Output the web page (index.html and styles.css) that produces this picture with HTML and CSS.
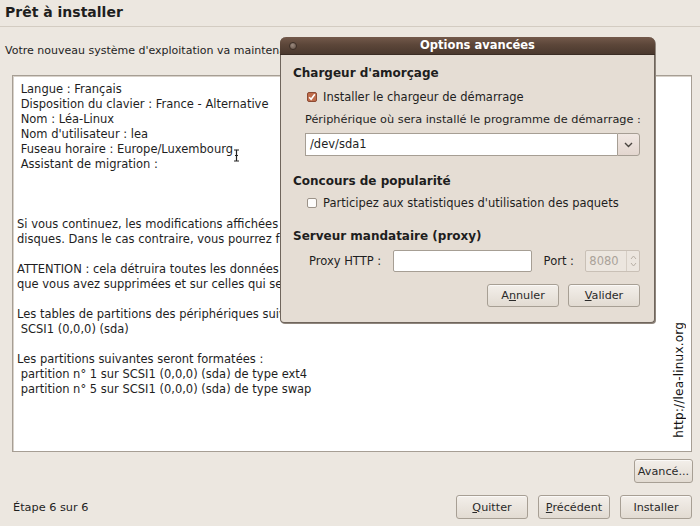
FILE: index.html
```html
<!DOCTYPE html>
<html lang="fr">
<head>
    <meta charset="UTF-8">
    <title>Prêt à installer</title>
    <link rel="stylesheet" href="styles.css">
</head>
<body>

    <!-- INSTALLER WINDOW -->
    <div class="installer">
        <h1 class="page-title">Prêt à installer</h1>
        <p class="intro">Votre nouveau système d'exploitation va maintenant être installé avec les paramètres suivants :</p>

        <div class="summary">
<pre class="summary-text"> Langue : Français
 Disposition du clavier : France - Alternative
 Nom : Léa-Linux
 Nom d'utilisateur : lea
 Fuseau horaire : Europe/Luxembourg
 Assistant de migration :



Si vous continuez, les modifications affichées ci-dessous seront écrites sur les
disques. Dans le cas contraire, vous pourrez faire d'autres modifications.

ATTENTION : cela détruira toutes les données présentes sur les partitions
que vous avez supprimées et sur celles qui seront formatées.

Les tables de partitions des périphériques suivants seront modifiées :
 SCSI1 (0,0,0) (sda)

Les partitions suivantes seront formatées :
 partition n° 1 sur SCSI1 (0,0,0) (sda) de type ext4
 partition n° 5 sur SCSI1 (0,0,0) (sda) de type swap</pre>
            <svg class="ibeam" width="7" height="13" viewBox="0 0 7 13">
                <path d="M1 1h2l.5 .5.5-.5h2M3.5 1.5v10M1 12h2l.5-.5.5.5h2M2 6.5h3" fill="none" stroke="#222" stroke-width="1.2"/>
            </svg>
            <span class="watermark">http://lea-linux.org</span>
        </div>

        <div class="advanced-row">
            <button class="btn">Avancé...</button>
        </div>

        <div class="footer">
            <span class="step">Étape 6 sur 6</span>
            <div class="nav">
                <button class="btn"><u>Q</u>uitter</button>
                <button class="btn"><u>P</u>récédent</button>
                <button class="btn">Installer</button>
            </div>
        </div>
    </div>

    <!-- ADVANCED OPTIONS DIALOG -->
    <div class="dialog">
        <div class="dialog-titlebar">
            <span class="close-dot"></span>
            <span class="dialog-title">Options avancées</span>
        </div>

        <div class="dialog-body">
            <h2 class="section">Chargeur d'amorçage</h2>
            <label class="check-row">
                <span class="checkbox checked">
                    <svg width="8" height="8" viewBox="0 0 8 8"><path d="M1.2 4.2l1.9 2 3.7-5" fill="none" stroke="#fff" stroke-width="1.6"/></svg>
                </span>
                Installer le chargeur de démarrage
            </label>
            <p class="field-label">Périphérique où sera installé le programme de démarrage :</p>
            <div class="combo">
                <span class="combo-entry">/dev/sda1</span>
                <span class="combo-button">
                    <svg width="9" height="6" viewBox="0 0 9 6"><path d="M1 1l3.5 3.5L8 1" fill="none" stroke="#4a4540" stroke-width="1.4"/></svg>
                </span>
            </div>

            <h2 class="section section-gap">Concours de popularité</h2>
            <label class="check-row check-row-tight">
                <span class="checkbox"></span>
                Participez aux statistiques d'utilisation des paquets
            </label>

            <h2 class="section section-gap2">Serveur mandataire (proxy)</h2>
            <div class="proxy-row">
                <span class="proxy-label">Proxy HTTP :</span>
                <span class="entry proxy-entry"></span>
                <span class="port-label">Port :</span>
                <span class="spin">
                    <span class="spin-value">8080</span>
                    <span class="spin-arrows">
                        <svg width="7" height="14" viewBox="0 0 7 14"><path d="M1 5l2.5-3L6 5M1 9l2.5 3L6 9" fill="none" stroke="#b8b0a6" stroke-width="1"/></svg>
                    </span>
                </span>
            </div>

            <div class="dialog-actions">
                <button class="btn">A<u>n</u>nuler</button>
                <button class="btn"><u>V</u>alider</button>
            </div>
        </div>
    </div>

</body>
</html>
```

FILE: styles.css
```css
* {
    margin: 0;
    padding: 0;
    box-sizing: border-box;
}

body {
    width: 700px;
    height: 526px;
    background: #ece7e0;
    font-family: "DejaVu Sans", sans-serif;
    font-size: 11.5px;
    color: #1e1e1e;
    overflow: hidden;
    position: relative;
}

/* INSTALLER WINDOW */
.installer {
    display: flex;
    flex-direction: column;
    height: 526px;
}

.page-title {
    font-size: 14px;
    font-weight: bold;
    padding: 4px 5px 0;
    height: 27px;
    border-bottom: 1px solid #d3ccc2;
}

.intro {
    font-size: 11px;
    padding: 17px 5px 0;
    height: 48px;
    white-space: nowrap;
}

.summary {
    position: relative;
    margin: 0 8px 0 12px;
    height: 377px;
    background: #fff;
    border: 1px solid #a69e94;
    box-shadow: inset 1px 1px 0 #d8d2ca;
    overflow: hidden;
}

.summary-text {
    font-family: "DejaVu Sans", sans-serif;
    font-size: 11.5px;
    line-height: 15px;
    padding: 6px 0 0 4px;
    color: #1e1e1e;
}

.ibeam {
    position: absolute;
    left: 220px;
    top: 73px;
}

.watermark {
    position: absolute;
    right: 5px;
    top: 246px;
    font-size: 12px;
    color: #111;
    writing-mode: vertical-rl;
    transform: rotate(180deg);
    letter-spacing: 0.2px;
}

.btn {
    font-family: "DejaVu Sans", sans-serif;
    font-size: 11.2px;
    color: #2a2a2a;
    height: 24px;
    padding: 0 6px;
    border: 1px solid #a79f94;
    border-radius: 3px;
    background: linear-gradient(#f3efea, #e2dbd2);
    box-shadow: inset 0 1px 0 #fbf9f7;
}

.btn u { text-decoration: underline; }

.advanced-row {
    display: flex;
    justify-content: flex-end;
    padding: 7px 7px 0 0;
    height: 37px;
}

.advanced-row .btn { width: 59px; padding: 0; }

.footer {
    display: flex;
    justify-content: space-between;
    align-items: center;
    padding: 6px 8px 0 13px;
}

.step { font-size: 11.3px; }

.nav {
    display: flex;
    gap: 10px;
}

.nav .btn { width: 72px; }

/* DIALOG */
.dialog {
    position: absolute;
    left: 280px;
    top: 37px;
    width: 375px;
    height: 286px;
    background: #e5ddd4;
    border: 1px solid #6f655c;
    border-top: none;
    border-radius: 6px 6px 4px 4px;
    box-shadow: 1px 1px 0 #8f867d;
}

.dialog-titlebar {
    position: relative;
    height: 18px;
    margin: 0 -1px;
    border-radius: 6px 6px 0 0;
    background: linear-gradient(#73594b, #5c4639 45%, #4a382e);
    border-bottom: 1px solid #3a2c24;
    text-align: center;
}

.close-dot {
    position: absolute;
    left: 9px;
    top: 5px;
    width: 8px;
    height: 8px;
    border-radius: 50%;
    background: radial-gradient(circle at 40% 35%, #9b8a7f, #5f4d42);
    border: 1px solid #3c2e26;
}

.dialog-title {
    display: inline-block;
    padding-left: 20px;
    color: #fff;
    font-weight: bold;
    font-size: 11.5px;
    line-height: 17px;
}

.dialog-body {
    padding: 11px 14px 0 12px;
}

.section {
    font-size: 12px;
    font-weight: bold;
    line-height: 15px;
}

.section-gap { margin-top: 18px; }
.section-gap2 { margin-top: 19px; }

.check-row {
    display: flex;
    align-items: center;
    gap: 6px;
    padding-left: 14px;
    margin-top: 9px;
    line-height: 14px;
}

.check-row-tight { margin-top: 7px; }

.checkbox {
    display: inline-flex;
    align-items: center;
    justify-content: center;
    width: 10px;
    height: 10px;
    border: 1px solid #9c9389;
    border-radius: 2px;
    background: #fdfcfb;
}

.checkbox.checked {
    background: #bf6c4b;
    border-color: #8c4a33;
}

.field-label {
    padding-left: 12px;
    margin-top: 9px;
    line-height: 14px;
    font-size: 11.3px;
    white-space: nowrap;
}

.combo {
    display: flex;
    margin: 6px 0 0 12px;
    height: 23px;
}

.combo-entry {
    flex: 1;
    background: #fff;
    border: 1px solid #a69e94;
    border-right: none;
    padding: 0 4px;
    line-height: 21px;
}

.combo-button {
    width: 23px;
    display: flex;
    align-items: center;
    justify-content: center;
    border: 1px solid #a69e94;
    border-radius: 0 3px 3px 0;
    background: linear-gradient(#f1e8e3, #e3d6cf);
}

.proxy-row {
    display: flex;
    align-items: center;
    margin-top: 6px;
    height: 22px;
}

.proxy-label {
    padding-left: 16px;
    width: 101px;
}

.entry {
    background: #fff;
    border: 1px solid #a69e94;
    border-radius: 2px;
    height: 22px;
}

.proxy-entry { width: 139px; }

.port-label {
    width: 54px;
    padding-left: 12px;
}

.spin {
    display: flex;
    width: 55px;
    height: 22px;
    border: 1px solid #c9c0b6;
    border-radius: 2px;
    background: #ece6df;
}

.spin-value {
    flex: 1;
    color: #aaa299;
    line-height: 20px;
    padding-left: 3px;
}

.spin-arrows {
    width: 13px;
    display: flex;
    align-items: center;
    justify-content: center;
    border-left: 1px solid #d6cec5;
}

.dialog-actions {
    display: flex;
    justify-content: flex-end;
    gap: 9px;
    margin-top: 12px;
}

.dialog-actions .btn { width: 72px; height: 23px; }
```
